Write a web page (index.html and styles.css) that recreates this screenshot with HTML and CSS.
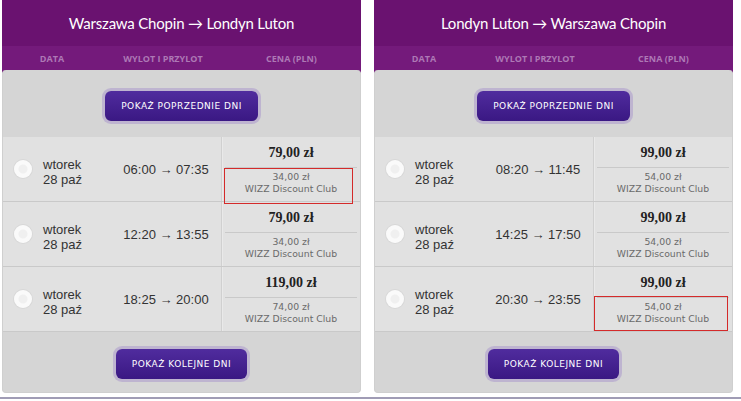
FILE: index.html
```html
<!DOCTYPE html>
<html lang="pl">
<head>
<meta charset="utf-8">
<title>Loty</title>
<link rel="stylesheet" href="styles.css">
</head>
<body>
<div class="page">
  <section class="panel">
    <h2 class="title">Warszawa Chopin → Londyn Luton</h2>
    <div class="cols"><span>DATA</span><span>WYLOT I PRZYLOT</span><span>CENA (PLN)</span></div>
    <div class="body">
      <div class="more top"><button class="btn">POKAŻ POPRZEDNIE DNI</button></div>
      <div class="row">
        <div class="date"><span class="radio"></span><span>wtorek<br>28 paź</span></div>
        <div class="time">06:00 → 07:35</div>
        <div class="price"><div class="main">79,00 zł</div><div class="club">34,00 zł<br>WIZZ Discount Club</div><span class="mark"></span></div>
      </div>
      <div class="row">
        <div class="date"><span class="radio"></span><span>wtorek<br>28 paź</span></div>
        <div class="time">12:20 → 13:55</div>
        <div class="price"><div class="main">79,00 zł</div><div class="club">34,00 zł<br>WIZZ Discount Club</div></div>
      </div>
      <div class="row">
        <div class="date"><span class="radio"></span><span>wtorek<br>28 paź</span></div>
        <div class="time">18:25 → 20:00</div>
        <div class="price"><div class="main">119,00 zł</div><div class="club">74,00 zł<br>WIZZ Discount Club</div></div>
      </div>
      <div class="more bottom"><button class="btn">POKAŻ KOLEJNE DNI</button></div>
    </div>
  </section>
  <section class="panel">
    <h2 class="title">Londyn Luton → Warszawa Chopin</h2>
    <div class="cols"><span>DATA</span><span>WYLOT I PRZYLOT</span><span>CENA (PLN)</span></div>
    <div class="body">
      <div class="more top"><button class="btn">POKAŻ POPRZEDNIE DNI</button></div>
      <div class="row">
        <div class="date"><span class="radio"></span><span>wtorek<br>28 paź</span></div>
        <div class="time">08:20 → 11:45</div>
        <div class="price"><div class="main">99,00 zł</div><div class="club">54,00 zł<br>WIZZ Discount Club</div></div>
      </div>
      <div class="row">
        <div class="date"><span class="radio"></span><span>wtorek<br>28 paź</span></div>
        <div class="time">14:25 → 17:50</div>
        <div class="price"><div class="main">99,00 zł</div><div class="club">54,00 zł<br>WIZZ Discount Club</div></div>
      </div>
      <div class="row">
        <div class="date"><span class="radio"></span><span>wtorek<br>28 paź</span></div>
        <div class="time">20:30 → 23:55</div>
        <div class="price"><div class="main">99,00 zł</div><div class="club">54,00 zł<br>WIZZ Discount Club</div><span class="mark alt"></span></div>
      </div>
      <div class="more bottom"><button class="btn">POKAŻ KOLEJNE DNI</button></div>
    </div>
  </section>
</div>
<div class="rule"></div>
</body>
</html>
```

FILE: styles.css
```css
* { box-sizing: border-box; }
html, body { margin: 0; padding: 0; background: #fff; }
body { width: 741px; height: 401px; overflow: hidden; font-family: "Liberation Sans", Arial, sans-serif; }

.page {
  display: flex;
  gap: 13px;
  padding-left: 2px;
}

.panel {
  width: 359px;
  background: linear-gradient(#741a7b 0, #741a7b 73px, transparent 73px);
}

.title {
  margin: 0;
  height: 46px;
  background: #6a1270;
  color: #fff;
  font-family: Lato, "Open Sans", sans-serif;
  font-weight: 400;
  font-size: 15px;
  letter-spacing: -0.2px;
  line-height: 46px;
  text-align: center;
}

.cols {
  height: 24px;
  display: grid;
  grid-template-columns: 100px 120px 139px;
  align-items: center;
  text-align: center;
  color: #ad78b5;
  font-family: "Open Sans", sans-serif;
  font-weight: 700;
  font-size: 9px;
  letter-spacing: 0;
}
.cols span:nth-child(2) { padding-left: 2px; }

.body {
  background: #d5d5d5;
  border-radius: 4px;
  border: 1px solid #cfcfcf;
  border-top: 0;
  height: 323px;
}

.more { display: flex; justify-content: center; }
.more.top { height: 67px; padding-top: 21px; }
.more.bottom { height: 60px; padding-top: 17px; }

.btn {
  height: 30px;
  padding: 0 16px;
  border: 0;
  border-radius: 6px;
  background: linear-gradient(#502c9e, #3a1883);
  box-shadow: 0 0 0 3px rgba(150, 120, 200, 0.35);
  color: #fff;
  font-family: "DejaVu Sans", Verdana, sans-serif;
  font-size: 9px;
  letter-spacing: 0.5px;
}

.row {
  height: 65px;
  display: grid;
  grid-template-columns: 100px 118px 1fr;
  background: #e1e1e1;
  border-bottom: 1px solid #c9c9c9;
  color: #333;
  font-size: 13px;
}

.date {
  display: flex;
  align-items: center;
  gap: 11px;
  padding-left: 11px;
  line-height: 15px;
}
.date span:last-child { margin-top: 5px; }

.radio {
  width: 18px;
  height: 18px;
  border-radius: 50%;
  background: radial-gradient(circle, #f0f0f0 0 4px, #fafafa 5px);
  box-shadow: 0 0 0 1px #d8d8d8;
  flex: none;
}

.time {
  display: flex;
  align-items: center;
  justify-content: center;
  padding-left: 8px;
  padding-top: 1px;
}

.price {
  position: relative;
  border-left: 1px solid #d0d0d0;
  box-shadow: inset 1px 0 0 #e9e9e9;
  text-align: center;
}

.main {
  height: 31px;
  margin: 0 3px;
  border-bottom: 1px solid #c9c9c9;
  font-family: "Liberation Serif", "Times New Roman", serif;
  font-weight: 700;
  font-size: 14px;
  line-height: 32px;
  color: #222;
}

.club {
  padding-top: 3px;
  font-family: "DejaVu Sans", Verdana, sans-serif;
  font-size: 9.3px;
  line-height: 12px;
  color: #6a6a6a;
}

.mark {
  position: absolute;
  left: 2px;
  top: 31px;
  width: 129px;
  height: 36px;
  border: 1px solid #d42a2a;
}
.mark.alt {
  left: 0;
  top: 29px;
  width: 134px;
  height: 35px;
}

.rule {
  margin-top: 4px;
  height: 2px;
  background: #a09cb5;
}
```
